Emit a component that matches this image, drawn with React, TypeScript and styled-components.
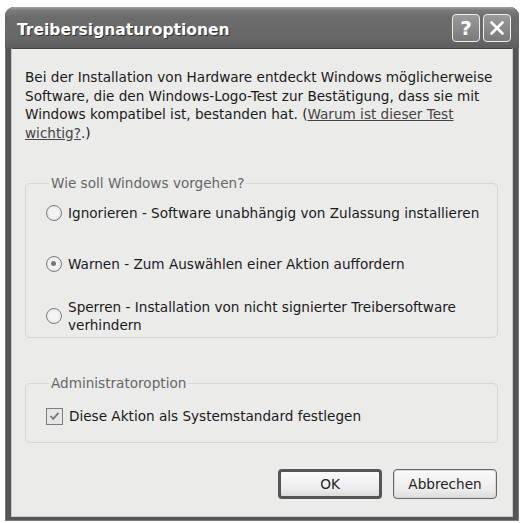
import React from 'react';
import styled, { createGlobalStyle } from 'styled-components';

const Global = createGlobalStyle`
  html, body {
    margin: 0;
    padding: 0;
    background: #ffffff;
  }
  body {
    font-family: "DejaVu Sans", Verdana, sans-serif;
  }
`;

const Page = styled.div`
  padding: 7px 2px 2px 5px;
`;

const Window = styled.div`
  width: 514px;
  height: 514px;
  display: flex;
  flex-direction: column;
  background: #555;
  border-radius: 9px 9px 0 0;
  box-shadow: inset 0 0 0 1px #7a7a7a;
  overflow: hidden;
`;

const TitleBar = styled.div`
  height: 41px;
  flex: none;
  display: flex;
  align-items: center;
  justify-content: space-between;
  padding: 0 8px 0 12px;
  background: linear-gradient(#a4a4a4 0px, #7c7c7c 3px, #6c6c6c 10px, #686868 30px, #5e5e5e 41px);
  border-radius: 9px 9px 0 0;
`;

const Title = styled.div`
  color: #fff;
  font-weight: bold;
  font-size: 15.5px;
  padding-top: 5px;
  text-shadow: 1px 1px 0 #333;
`;

const Controls = styled.div`
  display: flex;
  gap: 3px;
  padding-top: 1px;
`;

const CtrlButton = styled.div`
  width: 28px;
  height: 28px;
  box-sizing: border-box;
  border: 1px solid #eee;
  border-radius: 4px;
  background: linear-gradient(#9a9a9a, #7a7a7a);
  display: flex;
  align-items: center;
  justify-content: center;
  color: #fff;
  font-weight: bold;
  font-size: 20px;
  font-family: "DejaVu Sans", sans-serif;
`;

const Body = styled.div`
  flex: 1;
  margin: 0 6px 4px 6px;
  background: #ebebea;
  border: 1px solid #c9c9c9;
  border-top-color: #444;
  padding: 19px 14px 16px 13px;
  display: flex;
  flex-direction: column;
  color: #1a1a1a;
  font-size: 13.6px;
`;

const Intro = styled.p`
  margin: 0;
  line-height: 18.5px;
`;

const Link = styled.a`
  color: #444;
  text-decoration: underline;
`;

const Group = styled.fieldset<{ $top: number; $height: number }>`
  margin: ${p => p.$top}px 0 0 0;
  height: ${p => p.$height}px;
  box-sizing: border-box;
  border: 1px solid #d6d6d2;
  border-radius: 5px;
  padding: 0 8px 0 20px;
  display: flex;
  flex-direction: column;
`;

const Legend = styled.legend`
  color: #666;
  padding: 0 2px;
  margin-left: 3px;
`;

const OptionRow = styled.label<{ $gap: number }>`
  display: flex;
  align-items: center;
  gap: 6px;
  margin-top: ${p => p.$gap}px;
  line-height: 18px;
`;

const Radio = styled.span<{ $checked?: boolean }>`
  flex: none;
  width: 16px;
  height: 16px;
  box-sizing: border-box;
  border-radius: 50%;
  border: 1.5px solid #7c7c7c;
  background: radial-gradient(circle, #f4f4f4 40%, #dedede 100%);
  position: relative;
  &::after {
    content: '';
    display: ${p => (p.$checked ? 'block' : 'none')};
    position: absolute;
    left: 4px;
    top: 4px;
    width: 5px;
    height: 5px;
    border-radius: 50%;
    background: #777;
  }
`;

const Check = styled.span`
  flex: none;
  width: 17px;
  height: 17px;
  box-sizing: border-box;
  border: 1.5px solid #7c7c7c;
  background: #e6e6e6;
  display: flex;
  align-items: center;
  justify-content: center;
`;

const Buttons = styled.div`
  margin-top: 26px;
  display: flex;
  justify-content: flex-end;
  gap: 11px;
  padding-right: 1px;
`;

const Button = styled.button<{ $default?: boolean }>`
  width: 104px;
  height: 30px;
  box-sizing: border-box;
  font-family: inherit;
  font-size: 13.6px;
  color: #222;
  border-radius: 4px;
  border: ${p => (p.$default ? '3px solid #555' : '1px solid #666')};
  box-shadow: ${p => (p.$default ? 'none' : 'inset 0 0 0 1px #d8d8d8')};
  background: linear-gradient(#fafafa, #ececec 70%, #dcdcdc);
  padding: 0;
`;

export default function App() {
  return (
    <Page>
      <Global />
      <Window>
        <TitleBar>
          <Title>Treibersignaturoptionen</Title>
          <Controls>
            <CtrlButton>?</CtrlButton>
            <CtrlButton>
              <svg width="16" height="16" viewBox="0 0 16 16">
                <path d="M2.5 2.5 L13.5 13.5 M13.5 2.5 L2.5 13.5" stroke="#fff" strokeWidth="2.6" strokeLinecap="round" />
              </svg>
            </CtrlButton>
          </Controls>
        </TitleBar>
        <Body>
          <Intro>
            Bei der Installation von Hardware entdeckt Windows möglicherweise Software, die den
            Windows-Logo-Test zur Bestätigung, dass sie mit Windows kompatibel ist, bestanden hat.
            {' ('}<Link>Warum ist dieser Test wichtig?</Link>.)
          </Intro>
          <Group $top={33} $height={163}>
            <Legend>Wie soll Windows vorgehen?</Legend>
            <OptionRow $gap={13}>
              <Radio />
              Ignorieren - Software unabhängig von Zulassung installieren
            </OptionRow>
            <OptionRow $gap={33}>
              <Radio $checked />
              Warnen - Zum Auswählen einer Aktion auffordern
            </OptionRow>
            <OptionRow $gap={25}>
              <Radio />
              Sperren - Installation von nicht signierter Treibersoftware verhindern
            </OptionRow>
          </Group>
          <Group $top={37} $height={68}>
            <Legend>Administratoroption</Legend>
            <OptionRow $gap={16}>
              <Check>
                <svg width="11" height="10" viewBox="0 0 11 10">
                  <path d="M1.5 5 L4.2 7.8 L9.5 1.8" fill="none" stroke="#777" strokeWidth="1.8" />
                </svg>
              </Check>
              Diese Aktion als Systemstandard festlegen
            </OptionRow>
          </Group>
          <Buttons>
            <Button $default>OK</Button>
            <Button>Abbrechen</Button>
          </Buttons>
        </Body>
      </Window>
    </Page>
  );
}
